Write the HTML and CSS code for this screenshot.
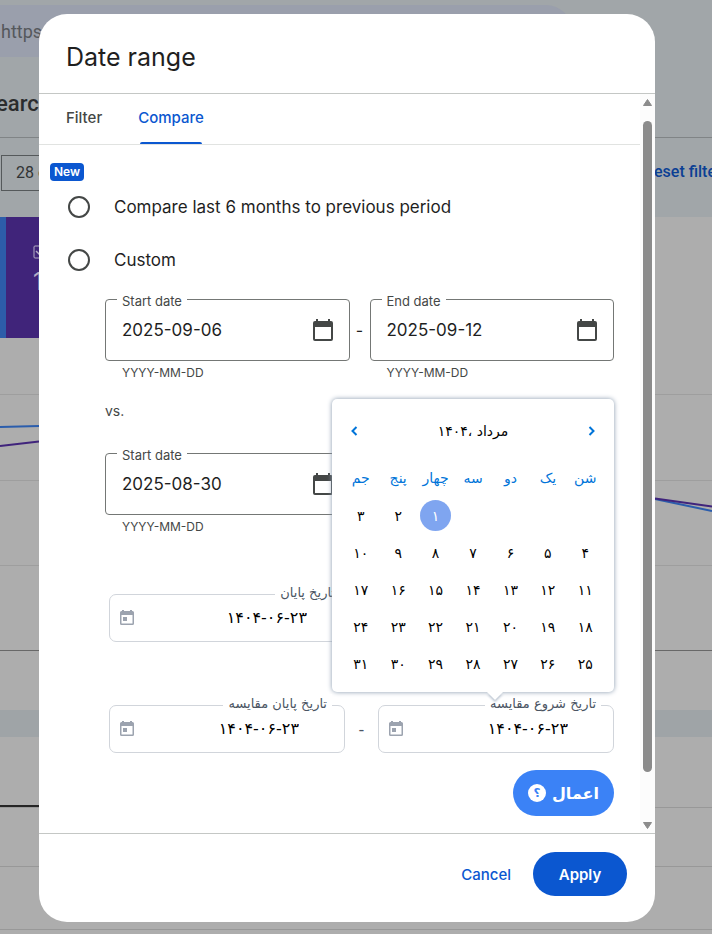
FILE: index.html
```html
<!DOCTYPE html>
<html lang="en">
<head>
<meta charset="utf-8">
<title>Date range</title>
<link rel="stylesheet" href="styles.css">
</head>
<body>
<div class="page" aria-hidden="true">
  <div class="page-top">
    <div class="url-bar">https:</div>
    <div class="page-heading">earc</div>
    <div class="page-filters">
      <div class="chip">28 d</div>
      <div class="reset">eset filters</div>
    </div>
  </div>
  <div class="cards">
    <div class="card-blue"></div>
    <div class="card-purple">
      <svg width="14" height="14" viewBox="0 0 14 14"><rect x="1" y="1" width="12" height="12" rx="1" fill="none" stroke="#b4aec4" stroke-width="1"/><path d="M3 6l3 3 5-5" fill="none" stroke="#b4aec4" stroke-width="1.500"/></svg>
      <span>1</span>
    </div>
  </div>
  <svg class="chart" viewBox="0 0 712 372" preserveAspectRatio="none">
    <path d="M0 56.500H712M0 142.500H712M0 227.500H712" stroke="#9e9e9e"/>
    <path d="M0 312.500H712" stroke="#686868"/>
    <path d="M0 89L39 88M655 161L712 173" stroke="#2b5dac" stroke-width="2" fill="none"/>
    <path d="M0 108L39 103.500M655 160.500L712 168.500" stroke="#40247c" stroke-width="2" fill="none"/>
  </svg>
  <div class="band"></div>
  <div class="rows">
    <div class="row-tabs"><span></span></div>
    <div class="row-head"></div>
    <div class="row-item"></div>
  </div>
</div>

<div class="overlay">
  <section class="dialog" role="dialog" aria-labelledby="title">
    <header class="dialog-head"><h1 id="title">Date range</h1></header>
    <div class="dialog-body">
      <div class="content">
        <div class="tabs" role="tablist">
          <button class="tab" role="tab">Filter</button>
          <button class="tab tab-active" role="tab" aria-selected="true">Compare</button>
        </div>
        <span class="badge">New</span>
        <div class="options">
          <label class="option"><input type="radio" name="mode"><span>Compare last 6 months to previous period</span></label>
          <label class="option"><input type="radio" name="mode"><span>Custom</span></label>
        </div>
        <div class="dates">
          <div class="date-row">
            <div class="field">
              <label for="start1">Start date</label>
              <div class="box"><input id="start1" type="text" value="2025-09-06">
                <svg class="cal" viewBox="0 0 20 22"><path fill-rule="evenodd" d="M3 0h2v2h10V0h2v2h1a2 2 0 0 1 2 2v16a2 2 0 0 1-2 2H2a2 2 0 0 1-2-2V4a2 2 0 0 1 2-2h1zM2 8v12h16V8z"/></svg></div>
              <p class="hint">YYYY-MM-DD</p>
            </div>
            <span class="dash">-</span>
            <div class="field">
              <label for="end1">End date</label>
              <div class="box"><input id="end1" type="text" value="2025-09-12">
                <svg class="cal" viewBox="0 0 20 22"><path fill-rule="evenodd" d="M3 0h2v2h10V0h2v2h1a2 2 0 0 1 2 2v16a2 2 0 0 1-2 2H2a2 2 0 0 1-2-2V4a2 2 0 0 1 2-2h1zM2 8v12h16V8z"/></svg></div>
              <p class="hint">YYYY-MM-DD</p>
            </div>
          </div>
          <p class="versus">vs.</p>
          <div class="date-row">
            <div class="field">
              <label for="start2">Start date</label>
              <div class="box"><input id="start2" type="text" value="2025-08-30">
                <svg class="cal" viewBox="0 0 20 22"><path fill-rule="evenodd" d="M3 0h2v2h10V0h2v2h1a2 2 0 0 1 2 2v16a2 2 0 0 1-2 2H2a2 2 0 0 1-2-2V4a2 2 0 0 1 2-2h1zM2 8v12h16V8z"/></svg></div>
              <p class="hint">YYYY-MM-DD</p>
            </div>
          </div>
        </div>

        <div class="jalali" lang="fa" dir="rtl">
          <div class="jalali-row">
            <div class="jfield jfield-wide">
              <label for="jend">تاریخ پایان</label>
              <input id="jend" type="text" dir="ltr" value="۱۴۰۴-۰۶-۲۳">
              <svg class="jcal" viewBox="0 0 14 15"><path fill-rule="evenodd" d="M2 0h2v1h6V0h2v1h.5A1.500 1.500 0 0 1 14 2.500v11a1.500 1.500 0 0 1-1.500 1.500h-11A1.500 1.500 0 0 1 0 13.500v-11A1.500 1.500 0 0 1 1.500 1H2zM1.500 5v8.500h11V5zM3 7h4v4H3z"/></svg>
            </div>
          </div>
          <div class="jalali-row">
            <div class="jfield">
              <label for="jcs">تاریخ شروع مقایسه</label>
              <input id="jcs" type="text" dir="ltr" value="۱۴۰۴-۰۶-۲۳">
              <svg class="jcal" viewBox="0 0 14 15"><path fill-rule="evenodd" d="M2 0h2v1h6V0h2v1h.5A1.500 1.500 0 0 1 14 2.500v11a1.500 1.500 0 0 1-1.500 1.500h-11A1.500 1.500 0 0 1 0 13.500v-11A1.500 1.500 0 0 1 1.500 1H2zM1.500 5v8.500h11V5zM3 7h4v4H3z"/></svg>
              <div class="picker">
                <div class="picker-head">
                  <button aria-label="ماه بعد"><svg viewBox="0 0 8 10"><path d="M1.500 1l4 4-4 4"/></svg></button>
                  <span>مرداد ،۱۴۰۴</span>
                  <button aria-label="ماه قبل"><svg viewBox="0 0 8 10"><path d="M6.500 1l-4 4 4 4"/></svg></button>
                </div>
                <table>
                  <thead><tr><th>شن</th><th>یک</th><th>دو</th><th>سه</th><th>چهار</th><th>پنج</th><th>جم</th></tr></thead>
                  <tbody>
                    <tr><td></td><td></td><td></td><td></td><td><button class="day-selected">۱</button></td><td><button>۲</button></td><td><button>۳</button></td></tr>
                    <tr><td><button>۴</button></td><td><button>۵</button></td><td><button>۶</button></td><td><button>۷</button></td><td><button>۸</button></td><td><button>۹</button></td><td><button>۱۰</button></td></tr>
                    <tr><td><button>۱۱</button></td><td><button>۱۲</button></td><td><button>۱۳</button></td><td><button>۱۴</button></td><td><button>۱۵</button></td><td><button>۱۶</button></td><td><button>۱۷</button></td></tr>
                    <tr><td><button>۱۸</button></td><td><button>۱۹</button></td><td><button>۲۰</button></td><td><button>۲۱</button></td><td><button>۲۲</button></td><td><button>۲۳</button></td><td><button>۲۴</button></td></tr>
                    <tr><td><button>۲۵</button></td><td><button>۲۶</button></td><td><button>۲۷</button></td><td><button>۲۸</button></td><td><button>۲۹</button></td><td><button>۳۰</button></td><td><button>۳۱</button></td></tr>
                  </tbody>
                </table>
              </div>
            </div>
            <span class="jdash">-</span>
            <div class="jfield">
              <label for="jce">تاریخ پایان مقایسه</label>
              <input id="jce" type="text" dir="ltr" value="۱۴۰۴-۰۶-۲۳">
              <svg class="jcal" viewBox="0 0 14 15"><path fill-rule="evenodd" d="M2 0h2v1h6V0h2v1h.5A1.500 1.500 0 0 1 14 2.500v11a1.500 1.500 0 0 1-1.500 1.500h-11A1.500 1.500 0 0 1 0 13.500v-11A1.500 1.500 0 0 1 1.500 1H2zM1.500 5v8.500h11V5zM3 7h4v4H3z"/></svg>
            </div>
          </div>
          <button class="japply"><span>اعمال</span><span class="help">؟</span></button>
        </div>
      </div>
      <div class="scrollbar" aria-hidden="true">
        <svg viewBox="0 0 9 7"><path d="M4.500.5L8.500 6.500H.5z"/></svg>
        <div class="thumb"></div>
        <svg viewBox="0 0 9 7"><path d="M4.500 6.500L.5.5h8z"/></svg>
      </div>
    </div>
    <footer class="dialog-foot">
      <button class="cancel">Cancel</button>
      <button class="apply">Apply</button>
    </footer>
  </section>
</div>
</body>
</html>
```
FILE: styles.css
```css
* { box-sizing: border-box; }

body {
  margin: 0;
  min-height: 100vh;
  overflow: hidden;
  background: #adadad;
  color: #1f1f1f;
  font-family: Inter, "DejaVu Sans", sans-serif;
  font-size: 16px;
}

h1, p { margin: 0; }

button, input {
  margin: 0;
  padding: 0;
  border: 0;
  background: none;
  color: inherit;
  font: inherit;
}

/* Page behind the dialog */
.page { height: 100vh; display: flex; flex-direction: column; overflow: hidden; }
.page-top { flex: none; height: 217px; padding-top: 5px; background: #a1a6a9; }
.url-bar {
  height: 52px;
  margin-right: 140px;
  padding-left: 1px;
  border-radius: 0 26px 26px 0;
  background: #9a9fac;
  color: #55585c;
  font-family: Roboto, sans-serif;
  font-size: 18px;
  line-height: 54px;
}
.page-heading {
  height: 81px;
  border-bottom: 1px solid #808486;
  color: #2b2c2d;
  font-family: Roboto, sans-serif;
  font-size: 22px;
  font-weight: 500;
  line-height: 94px;
  text-indent: -4px;
}
.page-filters { display: flex; justify-content: space-between; padding-top: 17px; line-height: 34px; }
.chip {
  width: 120px;
  height: 36px;
  margin-left: 1px;
  padding-left: 14px;
  border: 1px solid #55595b;
  color: #303334;
  font-family: Roboto, sans-serif;
}
.reset { width: 58px; white-space: nowrap; overflow: hidden; color: #0b3f94; font-family: Roboto, sans-serif; font-weight: 500; }
.cards { flex: none; display: flex; height: 121px; }
.card-blue { width: 6px; background: #2d5da9; }
.card-purple {
  display: flex;
  flex-direction: column;
  gap: 8px;
  width: 240px;
  padding: 28px 27px;
  background: #40247a;
  color: #b4aec4;
  font-size: 24px;
}
.chart { flex: none; display: block; width: 100%; height: 372px; }
.band { flex: none; height: 27px; background: #9fa4a7; }
.row-tabs { height: 71px; border-bottom: 1px solid #989898; }
.row-tabs span { display: block; width: 120px; height: 100%; border-bottom: 2px solid #252525; }
.row-head { height: 59px; border-bottom: 1px solid #989898; }
.row-item { height: 63px; border-bottom: 1px solid #989898; }

/* Dialog */
.overlay { position: absolute; inset: 0; display: flex; padding: 14px 57px 12px 39px; }
.dialog {
  flex: 1;
  min-width: 0;
  display: flex;
  flex-direction: column;
  border-radius: 28px;
  background: #fff;
}
.dialog-head { padding: 27px 27px 20px; border-bottom: 1px solid #c4c7c5; }
.dialog-head h1 { font-size: 25px; font-weight: 400; line-height: 32px; }
.dialog-body { flex: 1; display: flex; border-bottom: 1px solid #c4c7c5; }
.content { flex: 1; min-width: 0; }

.tabs { display: flex; gap: 36px; height: 51px; padding: 0 27px; border-bottom: 1px solid #e1e3e1; }
.tab { position: relative; height: 50px; padding-bottom: 4px; color: #444746; font-size: 15px; font-weight: 500; }
.tab-active { color: #0b57d0; }
.tab-active::after {
  content: "";
  position: absolute;
  inset: auto 2px 0;
  height: 2px;
  border-radius: 2px 2px 0 0;
  background: #0b57d0;
}
.badge {
  display: block;
  width: 34px;
  height: 18px;
  margin: 18px 0 0 11px;
  border-radius: 4px;
  background: #0b57d0;
  color: #fff;
  font-size: 12px;
  font-weight: 600;
  line-height: 18px;
  text-align: center;
}
.options { display: flex; flex-direction: column; gap: 1px; padding-left: 29px; }
.option { display: flex; align-items: center; gap: 24px; height: 52px; font-size: 17px; }
.option input { appearance: none; width: 22px; height: 22px; border: 2px solid #444746; border-radius: 50%; }

.dates { padding: 13px 26px 0 66px; }
.date-row { display: grid; grid-template-columns: minmax(0, 1fr) 20px minmax(0, 1fr); }
.field { position: relative; }
.field label {
  position: absolute;
  top: -7px;
  left: 12px;
  padding: 0 5px;
  background: #fff;
  color: #444746;
  font-size: 13px;
  line-height: 18px;
}
.box { display: flex; align-items: center; height: 62px; padding: 0 16px; border: 1px solid #747775; border-radius: 4px; }
.box input { flex: 1; min-width: 0; font-size: 17px; }
.cal { flex: none; width: 20px; height: 22px; fill: #444746; }
.dash { line-height: 62px; text-align: center; }
.hint { padding-left: 17px; color: #444746; font-size: 12px; line-height: 24px; }
.versus { height: 68px; padding-top: 16px; color: #444746; font-size: 14px; line-height: 20px; }

/* Jalali fields */
.jalali { padding: 55px 26px 0 70px; font-family: "DejaVu Sans", sans-serif; }
.jalali-row { display: flex; justify-content: flex-end; align-items: center; margin-bottom: 63px; }
.jalali-row + .jalali-row { margin-bottom: 17px; }
.jfield { position: relative; flex: 1; min-width: 0; height: 48px; }
.jfield-wide { flex: none; width: 244px; }
.jfield label {
  position: absolute;
  top: -11px;
  right: 13px;
  padding: 0 5px;
  background: #fff;
  color: #4b5563;
  font-size: 13px;
  line-height: 20px;
}
.jfield input {
  width: 100%;
  height: 100%;
  padding: 0 45px 2px;
  border: 1px solid #d1d5db;
  border-radius: 7px;
  color: #000;
  font-size: 16px;
  text-align: right;
}
.jcal { position: absolute; top: 16px; left: 11px; width: 14px; height: 15px; fill: #9ca3af; }
.jdash { width: 33px; color: #4b5563; text-align: center; }
.japply {
  display: flex;
  align-items: center;
  justify-content: center;
  gap: 6px;
  width: 101px;
  height: 46px;
  border-radius: 23px;
  background: #3b82f6;
  color: #fff;
  font-size: 16px;
  font-weight: 700;
}
.help { width: 18px; height: 18px; border-radius: 50%; background: #fff; color: #3b82f6; font-size: 12px; line-height: 18px; }

/* Calendar popup */
.picker {
  position: absolute;
  right: 0;
  bottom: calc(100% + 13px);
  width: 282px;
  padding: 10px;
  border-radius: 5px;
  background: #fff;
  box-shadow: 0 0 5px #8798ad;
  color: #000;
  font-size: 14px;
}
.picker::after {
  content: "";
  position: absolute;
  bottom: -8px;
  left: 155px;
  border: 8px solid transparent;
  border-width: 8px 8px 0;
  border-top-color: #fff;
  filter: drop-shadow(0 2px 1px #b9c3d0);
}
.picker-head { display: flex; align-items: center; justify-content: space-between; height: 49px; padding: 0 8px 6px; }
.picker-head button { width: 8px; height: 10px; display: flex; }
.picker-head svg { width: 8px; height: 10px; fill: none; stroke: #0074d9; stroke-width: 2; }
.picker table { width: 100%; table-layout: fixed; border-collapse: collapse; }
.picker th { height: 39px; padding: 0; color: #0074d9; font-weight: 400; font-size: 14px; }
.picker td { height: 37px; padding: 0; text-align: center; vertical-align: middle; }
.picker td button { display: block; width: 31px; height: 31px; margin: 0 auto; border-radius: 50%; }
.picker .day-selected { background: #7fa5f0; color: #fff; }

/* Scrollbar */
.scrollbar { flex: none; width: 15px; display: flex; flex-direction: column; align-items: center; padding: 5px 0 4px; background: #fcfcfc; }
.scrollbar svg { width: 9px; height: 7px; fill: #8b8b8b; stroke: #8b8b8b; stroke-linejoin: round; }
.thumb { flex: 1; width: 9px; margin: 15px 0 50px; border-radius: 5px; background: #8b8b8b; }

/* Footer */
.dialog-foot { display: flex; justify-content: flex-end; align-items: center; gap: 22px; height: 88px; padding: 0 28px 8px; font-size: 15px; font-weight: 500; }
.cancel { color: #0b57d0; }
.apply { width: 94px; height: 44px; border-radius: 22px; background: #0b57d0; color: #fff; font-weight: 600; }
```
